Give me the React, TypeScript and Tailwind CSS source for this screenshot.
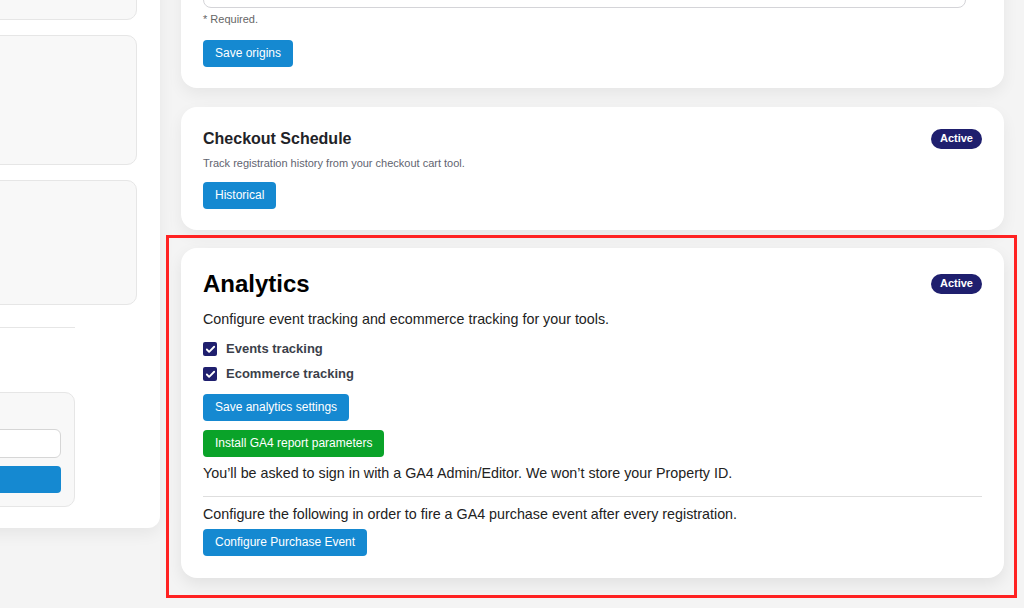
import { Check } from 'lucide-react';

const btn =
  'inline-flex items-center h-[27px] px-3 rounded-[4px] text-white text-[12px] font-medium self-start';
const blueBtn = `${btn} bg-[#1589d1]`;
const greenBtn = `${btn} bg-[#0aa329]`;

function ActiveBadge() {
  return (
    <span className="inline-flex items-center h-5 px-[9px] rounded-full bg-[#1f1f6e] text-white text-[11px] font-bold">
      Active
    </span>
  );
}

function CheckRow({ label }: { label: string }) {
  return (
    <label className="flex items-center gap-[9px] h-[25px]">
      <span className="w-[14px] h-[14px] rounded-[2px] bg-[#1f1f6e] flex items-center justify-center">
        <Check className="w-[11px] h-[11px] text-white" strokeWidth={4} />
      </span>
      <span className="text-[13px] font-bold text-[#3b3f4a]">{label}</span>
    </label>
  );
}

function SidePanel() {
  return (
    <div className="w-[400px] -ml-[240px] shrink-0">
      <div className="bg-white rounded-xl shadow-[0_6px_16px_rgba(0,0,0,0.06)] pt-6 pb-[21px] pr-[23px] pl-6">
        <div className="flex flex-col gap-[15px]">
          <div className="h-[96px] rounded-[10px] bg-[#f8f8f8] border border-[#e6e6e6]" />
          <div className="h-[130px] rounded-[10px] bg-[#f8f8f8] border border-[#e6e6e6]" />
          <div className="h-[125px] rounded-[10px] bg-[#f8f8f8] border border-[#e6e6e6]" />
        </div>
        <div className="mt-[22px] w-[291px] border-t border-[#e6e6e6]" />
        <div className="mt-[64px] w-[291px] h-[115px] rounded-[10px] bg-[#f8f8f8] border border-[#e6e6e6] pt-[36px] pr-[13px] pl-4 flex flex-col gap-2">
          <div className="h-[29px] rounded-md bg-white border border-[#d6d6d6]" />
          <div className="h-[27px] rounded-[4px] bg-[#1589d1]" />
        </div>
      </div>
    </div>
  );
}

export default function App() {
  return (
    <div
      className="relative w-[1024px] h-[608px] overflow-hidden bg-[#f4f4f4] text-[#222]"
      style={{ fontFamily: '"Liberation Sans", Arial, sans-serif' }}
    >
      <div className="flex -mt-[100px] pb-10">
        <SidePanel />

        <div className="ml-[21px] w-[823px] flex flex-col">
          {/* allowed origins */}
          <div className="bg-white rounded-2xl shadow-[0_6px_16px_rgba(0,0,0,0.06)] px-[22px] pb-[21px] pt-[60px] flex flex-col">
            <div className="mr-[16px] h-[48px] rounded-lg border border-[#d4d4d8] bg-white" />
            <p className="mt-[3px] text-[11px] text-[#666]">* Required.</p>
            <button className={`${blueBtn} mt-[12px]`}>Save origins</button>
          </div>

          {/* checkout schedule */}
          <div className="mt-[19px] bg-white rounded-2xl shadow-[0_6px_16px_rgba(0,0,0,0.06)] px-[22px] pt-[22px] pb-[21px] flex flex-col">
            <div className="flex items-center justify-between">
              <h2 className="text-[16px] leading-5 font-bold text-[#1f2328]">Checkout Schedule</h2>
              <ActiveBadge />
            </div>
            <p className="mt-[7px] text-[11px] leading-[14px] text-[#5f6470]">
              Track registration history from your checkout cart tool.
            </p>
            <button className={`${blueBtn} mt-[12px]`}>Historical</button>
          </div>

          {/* analytics */}
          <div className="mt-[18px] bg-white rounded-2xl shadow-[0_6px_16px_rgba(0,0,0,0.08)] px-[22px] pt-[22px] pb-[22px] flex flex-col">
            <div className="flex items-center justify-between h-7">
              <h2 className="text-[24px] leading-7 font-bold text-black">Analytics</h2>
              <ActiveBadge />
            </div>
            <p className="mt-[11px] text-[14.3px] leading-5">
              Configure event tracking and ecommerce tracking for your tools.
            </p>
            <div className="mt-[8px] flex flex-col">
              <CheckRow label="Events tracking" />
              <CheckRow label="Ecommerce tracking" />
            </div>
            <button className={`${blueBtn} mt-[7px]`}>Save analytics settings</button>
            <button className={`${greenBtn} mt-[9px]`}>Install GA4 report parameters</button>
            <p className="mt-[6px] text-[14.3px] leading-5">
              You’ll be asked to sign in with a GA4 Admin/Editor. We won’t store your Property ID.
            </p>
            <div className="mt-[13px] border-t border-[#dedede]" />
            <p className="mt-[7px] text-[14.3px] leading-5">
              Configure the following in order to fire a GA4 purchase event after every registration.
            </p>
            <button className={`${blueBtn} mt-[5px]`}>Configure Purchase Event</button>
          </div>
        </div>
      </div>

      {/* highlight frame */}
      <div className="absolute left-[166px] top-[235px] w-[851px] h-[363px] border-[3px] border-[#ff2222] pointer-events-none" />
    </div>
  );
}
